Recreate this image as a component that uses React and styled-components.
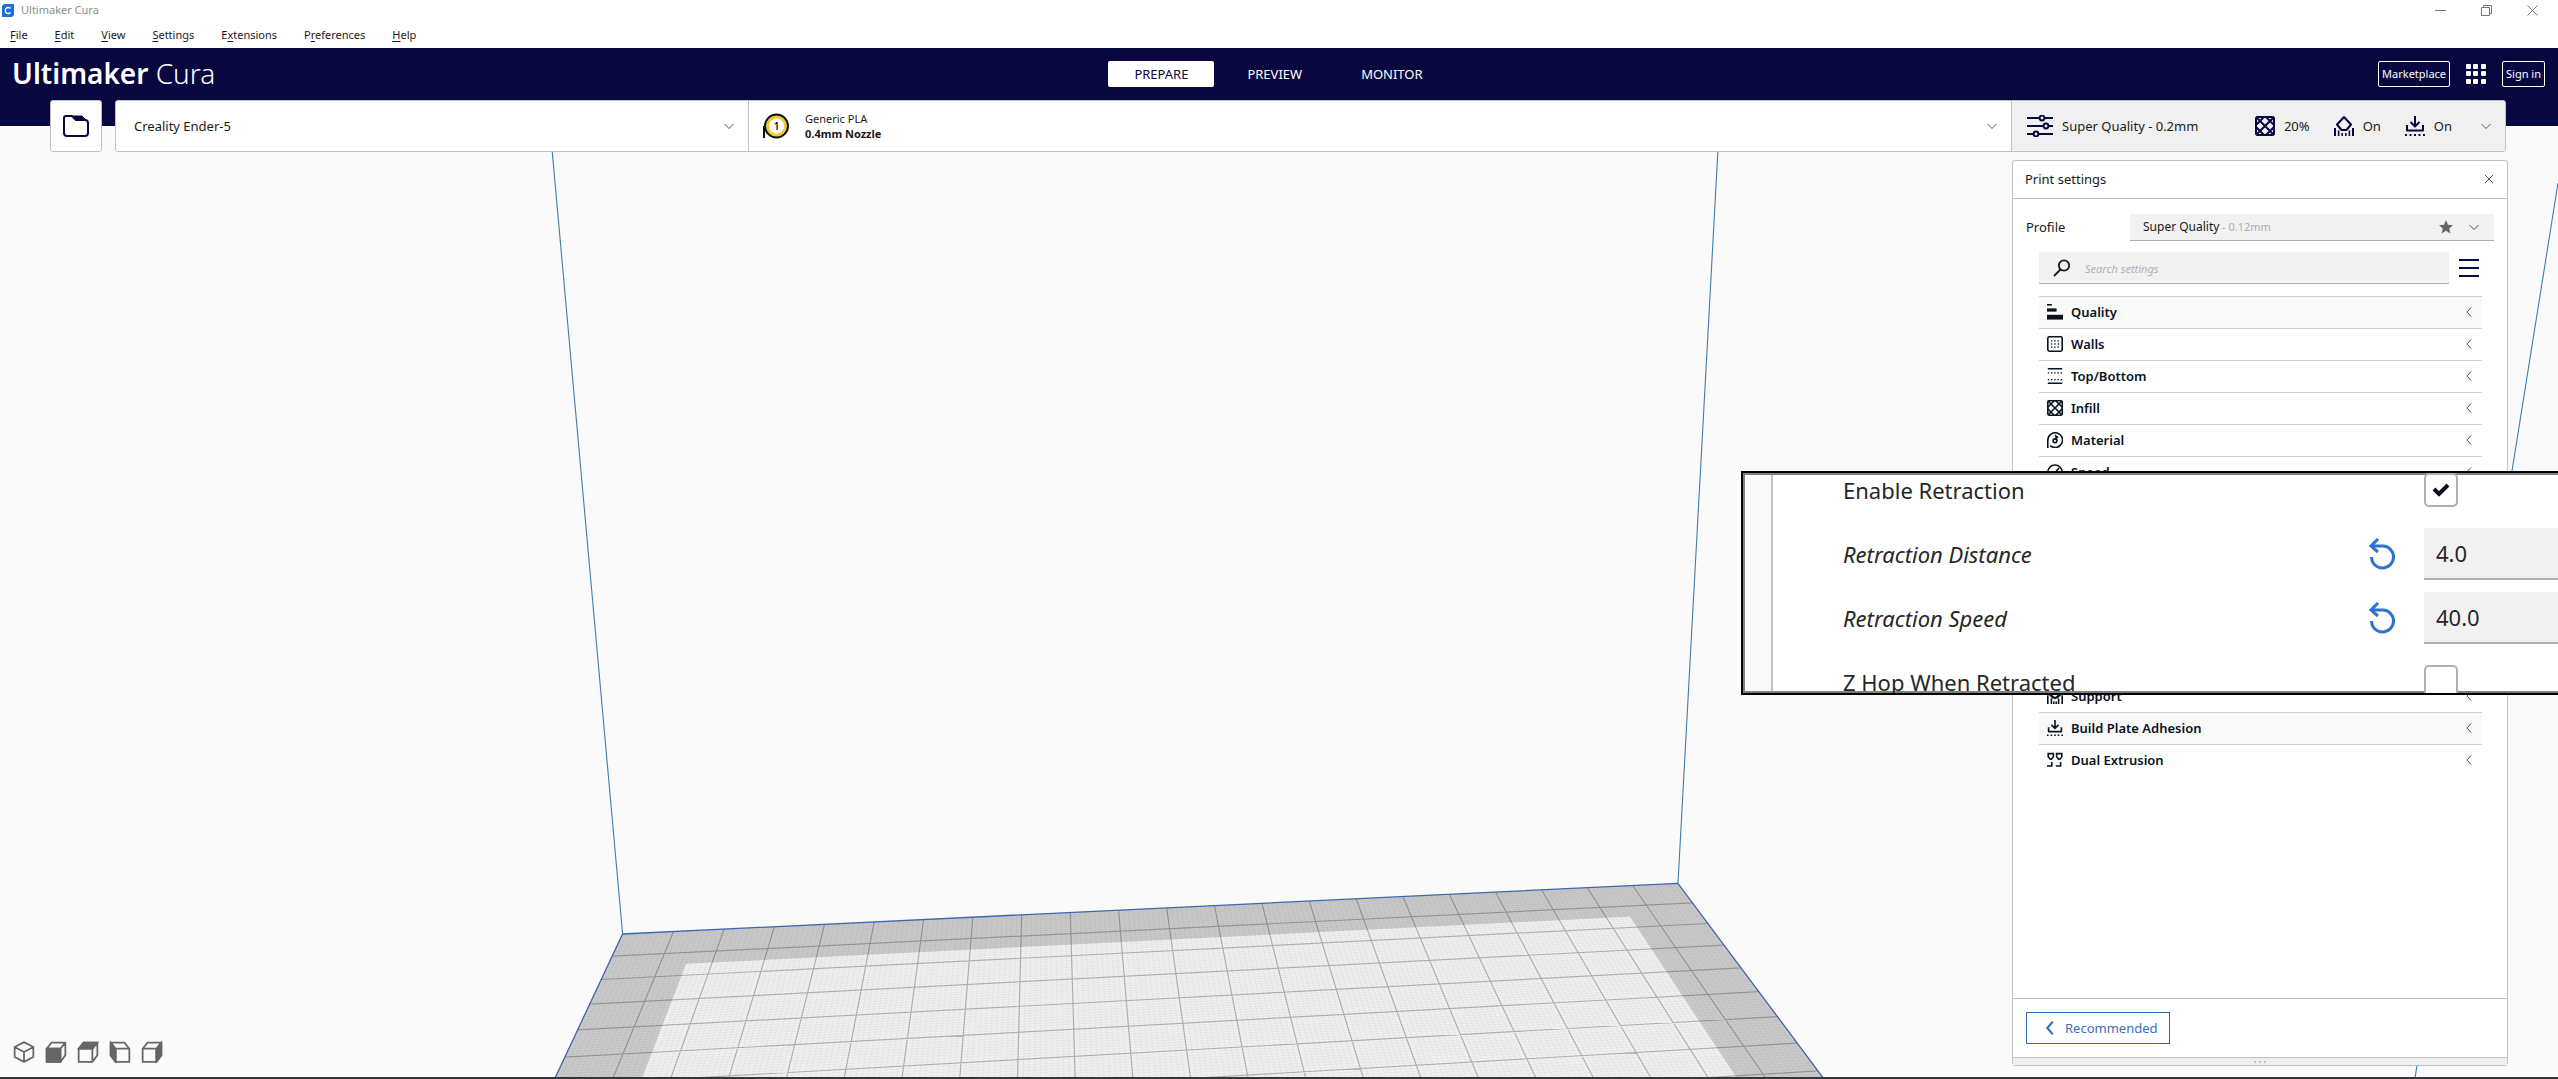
import React, { useState } from "react";
import styled, { createGlobalStyle, css } from "styled-components";

const NAVY = "#08073f";
const LINE = "#c0c1c2";
const TEXT = "#191919";

const GlobalStyle = createGlobalStyle`
  * {
    box-sizing: border-box;
  }

  body {
    margin: 0;
    background: #fafafa;
    color: ${TEXT};
    font-family: "Noto Sans", "Open Sans", sans-serif;
    font-size: 13px;
    line-height: 18px;
  }

  button, input, select {
    margin: 0;
    padding: 0;
    border: 0;
    background: none;
    color: inherit;
    font: inherit;
  }

  button {
    cursor: pointer;
  }

  svg {
    display: block;
    flex: none;
  }
`;

const Page = styled.div`
  position: relative;
  min-height: 100vh;
  display: flex;
  flex-direction: column;
  overflow: hidden;
  border-bottom: 2px solid #35363a;
`;

const TitleBar = styled.div`
  position: relative;
  display: flex;
  align-items: center;
  justify-content: space-between;
  height: 22px;
  padding: 0 20px 2px 2px;
  background: white;
  color: #8c8c8c;
  font-size: 11px;
`;

const AppTitle = styled.div`
  display: flex;
  align-items: center;
  gap: 7px;
`;

const WindowButtons = styled.div`
  display: flex;
  gap: 35px;
`;

const MenuBar = styled.nav`
  position: relative;
  display: flex;
  gap: 27px;
  height: 26px;
  padding: 4px 10px;
  background: white;
  font-size: 11px;
`;

const MenuItem = styled.button`
  u {
    text-underline-offset: 2px;
  }
`;

const Header = styled.header`
  position: relative;
  display: grid;
  grid-template-columns: 1fr auto 1fr;
  align-items: start;
  height: 78px;
  padding: 13px 13px 0 12px;
  background: ${NAVY};
  color: white;
`;

const Logo = styled.div`
  font-size: 28px;
  line-height: 24px;
  font-weight: 300;

  b {
    font-weight: 600;
  }
`;

const Stages = styled.div`
  display: flex;
  gap: 7px;
`;

const Stage = styled.button`
  height: 26px;
  padding: 0 26px;
  border-radius: 2px;
  font-size: 13px;
  background: ${props => (props.$active ? "white" : "transparent")};
  color: ${props => (props.$active ? NAVY : "white")};
`;

const Account = styled.div`
  display: flex;
  align-items: center;
  justify-content: flex-end;
  gap: 16px;
`;

const OutlineButton = styled.button`
  height: 26px;
  padding: 0 3px;
  border: 1px solid white;
  border-radius: 2px;
  font-size: 11px;
`;

const TopBar = styled.div`
  position: relative;
  display: flex;
  gap: 13px;
  height: 52px;
  margin: -26px 52px 0 50px;
`;

const boxed = css`
  border: 1px solid ${LINE};
  border-radius: 3px;
  background: white;
`;

const OpenButton = styled.button`
  ${boxed}
  display: flex;
  align-items: center;
  justify-content: center;
  width: 52px;
`;

const Selectors = styled.div`
  ${boxed}
  display: flex;
  flex: 1;
  overflow: hidden;
`;

const Selector = styled.button`
  display: flex;
  align-items: center;
  gap: ${props => props.$gap || 0}px;
  flex: ${props => props.$grow || "none"};
  width: ${props => (props.$width ? props.$width + "px" : "auto")};
  padding: 0 14px 0 ${props => props.$left}px;
  text-align: left;
  background: ${props => (props.$shaded ? "#f0f0f0" : "white")};

  & + & {
    border-left: 1px solid ${LINE};
  }
`;

const Grow = styled.span`
  flex: 1;
`;

const MaterialText = styled.span`
  display: flex;
  flex-direction: column;
  flex: 1;
  font-size: 11px;
  line-height: 15px;
`;

const Summary = styled.span`
  display: flex;
  align-items: center;
  gap: ${props => props.$gap || 9}px;
`;

const SummaryGroup = styled.span`
  display: flex;
  gap: 24px;
  margin-right: 29px;
`;

const Scene = styled.svg`
  position: absolute;
  top: 0;
  left: 0;
  width: 100%;
  height: 100%;
`;

const Workspace = styled.main`
  position: relative;
  display: flex;
  flex: 1;
  align-items: stretch;
  justify-content: space-between;
  padding: 8px 50px 11px 13px;
`;

const ViewButtons = styled.div`
  display: flex;
  align-items: flex-end;
  gap: 10px;
  padding-bottom: 3px;
`;

const Panel = styled.section`
  ${boxed}
  display: flex;
  flex-direction: column;
  width: 496px;
`;

const PanelHeader = styled.div`
  display: flex;
  align-items: center;
  justify-content: space-between;
  height: 38px;
  padding: 0 13px 2px 12px;
  border-bottom: 1px solid ${LINE};
`;

const ProfileRow = styled.div`
  display: flex;
  align-items: center;
  height: 28px;
  margin: 14px 13px 0 13px;

  label {
    width: 104px;
  }
`;

const ProfileBox = styled.div`
  display: flex;
  align-items: center;
  flex: 1;
  height: 27px;
  padding: 0 15px 0 13px;
  background: #f2f2f2;
  border-bottom: 1px solid #b0b0b0;
  font-size: 12px;

  select {
    appearance: none;
  }
`;

const ProfileHeight = styled.span`
  flex: 1;
  padding-left: 2px;
  font-size: 11px;
  color: #aaaaaa;
`;

const SearchRow = styled.div`
  display: flex;
  align-items: center;
  gap: 10px;
  margin: 11px 28px 12px 26px;
`;

const SearchBox = styled.label`
  display: flex;
  align-items: center;
  gap: 14px;
  flex: 1;
  height: 32px;
  padding: 0 14px;
  background: #f2f2f2;
  border-bottom: 1px solid #b0b0b0;

  input {
    flex: 1;
    padding-top: 3px;
    outline: none;
    font-size: 11px;
    font-style: italic;
  }

  input::placeholder {
    color: #b0b0b0;
  }
`;

const Categories = styled.div`
  display: flex;
  flex-direction: column;
  flex: 1;
  margin: 0 25px 0 26px;
`;

const Category = styled.button`
  display: flex;
  align-items: center;
  gap: 8px;
  height: 32px;
  padding: 0 8px 1px 8px;
  border-top: 1px solid #d0d0d0;
  background: ${props => (props.$shaded ? "#f9f9f9" : "white")};
  color: #08121e;
  font-weight: 600;
  text-align: left;
`;

const OpenSettings = styled.div`
  height: 192px;
`;

const PanelFooter = styled.div`
  padding: 13px;
  border-top: 1px solid ${LINE};
`;

const RecommendedButton = styled.button`
  display: flex;
  align-items: center;
  gap: 8px;
  height: 32px;
  padding: 0 11px 0 16px;
  border: 1px solid #2e6aa8;
  color: #3a6fc0;
`;

const DragHandle = styled.div`
  display: flex;
  align-items: center;
  justify-content: center;
  gap: 3px;
  height: 8px;
  border-top: 1px solid ${LINE};
  background: #f0f0f0;

  i {
    width: 2px;
    height: 2px;
    background: #c4c4c4;
  }
`;

const Magnifier = styled.section`
  position: absolute;
  top: 471px;
  right: 0;
  width: 817px;
  height: 224px;
  overflow: hidden;
  border: 2px solid black;
  border-right: 0;
  background: #fafafa;
`;

const MagnifierInner = styled.div`
  display: flex;
  height: 220px;
  padding-left: 26px;
  border: 2px solid #808080;
  border-right: 0;
`;

const MagnifierRows = styled.div`
  display: flex;
  flex-direction: column;
  justify-content: center;
  flex: 1;
  padding: 5px 0 0 70px;
  border-left: 2px solid #c4c4c4;
  background: white;
`;

const SettingRow = styled.div`
  display: flex;
  align-items: center;
  flex: none;
  height: 64px;
  font-size: 22px;
  line-height: 30px;
  color: #262626;

  label {
    flex: 1;
    font-style: ${props => (props.$changed ? "italic" : "normal")};
  }
`;

const SettingValue = styled.div`
  display: flex;
  width: 134px;
`;

const ResetButton = styled.button`
  margin-right: 27px;
`;

const NumberInput = styled.input`
  width: 100%;
  height: 52px;
  padding-left: 12px;
  background: #f2f2f2;
  border-bottom: 2px solid #b0b0b0;
`;

const CheckHolder = styled.div`
  position: relative;
  width: 34px;
  height: 34px;

  input {
    appearance: none;
    display: block;
    width: 34px;
    height: 34px;
    border: 2px solid #b0b0b0;
    border-radius: 5px;
    background: white;
  }

  svg {
    position: absolute;
    top: 9px;
    left: 8px;
    pointer-events: none;
  }
`;

// build plate seen in perspective, u runs along the back edge, v to the front (cm)
const plate = (u, v) => {
  const w = 1 + 0.00292 * u - 0.02408 * v;
  const x = (52.87 * u - 25.15 * v + 622.6) / w;
  const y = (0.277 * u - 0.85 * v + 935) / w;
  return `${x.toFixed(1)} ${y.toFixed(1)}`;
};

const PLATE_WIDTH = 22;
const PLATE_DEPTH = 10;

const gridPath = step => {
  let d = "";
  for (let i = 1; i * step < PLATE_WIDTH; i++) {
    d += `M${plate(i * step, 0)}L${plate(i * step, PLATE_DEPTH)}`;
  }
  for (let i = 1; i * step < PLATE_DEPTH; i++) {
    d += `M${plate(0, i * step)}L${plate(PLATE_WIDTH, i * step)}`;
  }
  return d;
};

const quad = (u1, u2, v1) =>
  `M${plate(u1, v1)}L${plate(u2, v1)}L${plate(u2, PLATE_DEPTH)}L${plate(u1, PLATE_DEPTH)}Z`;

const BuildVolume = () => (
  <Scene viewBox="0 0 2558 1079" preserveAspectRatio="xMidYMid slice">
    <path d={quad(0, 22, 0)} fill="#cacaca" />
    <path d={quad(1.5, 20.5, 1.5)} fill="#f0f0f0" />
    <path d={gridPath(0.1)} stroke="#000" strokeOpacity="0.04" strokeWidth="1" />
    <path d={gridPath(1)} stroke="#000" strokeOpacity="0.24" strokeWidth="1.2" />
    <path d={quad(0, 22, 0)} fill="none" stroke="#3c66ad" strokeWidth="1.3" />
    <path
      d="M552 150L622.6 935M1718 150L1678 884M2558 184L2415 1079"
      fill="none"
      stroke="#3d7cb4"
      strokeWidth="1.1"
    />
  </Scene>
);

const Icon = ({ size = 20, box = 20, width = 2, color = NAVY, children }) => (
  <svg
    width={size}
    height={size}
    viewBox={`0 0 ${box} ${box}`}
    fill="none"
    stroke={color}
    strokeWidth={width}
    aria-hidden="true"
  >
    {children}
  </svg>
);

const Chevron = ({ left, size = 10, width = 1, color = "#555" }) => (
  <Icon size={size} box={10} width={width} color={color}>
    <path d={left ? "M7 0.5L3 5L7 9.5" : "M0.5 3L5 7.5L9.5 3"} />
  </Icon>
);

const InfillShape = () => (
  <>
    <rect x="1" y="1" width="18" height="18" rx="2" />
    <path d="M1 1L19 19M1 19L19 1M1 9L9 1M11 19L19 11M1 11L9 19M11 1L19 9" />
  </>
);

const SupportShape = () => (
  <>
    <path d="M10 1L17 8.5L12.5 14H7.5L3 8.5Z" strokeLinejoin="round" />
    <path d="M1 12V20M19 12V20" />
    <path d="M4.6 14.5V20M15.4 14.5V20M8.2 17V20M11.8 17V20" strokeWidth="1.6" />
  </>
);

const SmallSupportShape = () => (
  <>
    <path d="M3 1V8L7 12H13L17 8V1M3 7L10 13L17 7" strokeLinejoin="round" />
    <path d="M1 9V20M19 9V20M5.5 13V20M14.5 13V20M8.5 17V20M11.5 17V20" />
  </>
);

const AdhesionShape = () => (
  <>
    <path d="M10 0V10M5.5 6L10 10.5L14.5 6M2 9V14.5H18V9" strokeLinejoin="round" />
    <path d="M0 19H20" strokeDasharray="2 2.5" />
  </>
);

const CATEGORY_ICONS = {
  Quality: (
    <>
      <path d="M0 1H6" />
      <path d="M0 7.5H12" strokeWidth="4" />
      <path d="M0 16.5H20" strokeWidth="6" />
    </>
  ),
  Walls: (
    <>
      <rect x="1" y="1" width="18" height="18" rx="2" />
      <path
        d="M5 6H15.5M5 14H15.5M5.8 9V12M14.2 9V12M10 9V12"
        strokeWidth="1.6"
        strokeDasharray="1.8 2.2"
      />
    </>
  ),
  "Top/Bottom": (
    <>
      <path d="M1 1H19M1 19H19" />
      <path d="M1 6H19M1 14.5H19" strokeWidth="1.6" strokeDasharray="1.8 2.2" />
    </>
  ),
  Infill: <InfillShape />,
  Material: (
    <>
      <path d="M1 20V10A9.2 9.2 0 1 1 4 17" />
      <circle cx="10" cy="11" r="2.4" />
      <path d="M12 10L11 5L14 7" />
    </>
  ),
  Speed: (
    <>
      <path d="M4 17A9 9 0 1 1 16 17" />
      <path d="M10 11L15 5" />
    </>
  ),
  Support: <SmallSupportShape />,
  "Build Plate Adhesion": <AdhesionShape />,
  "Dual Extrusion": (
    <>
      <path d="M1.5 2H8V6L5.5 9H4L1.5 6ZM12 2H18.5V6L16 9H14.5L12 6Z" />
      <path d="M6 12.5V17.5H0M17 12.5V17.5H11" />
    </>
  )
};

const UPPER_CATEGORIES = ["Quality", "Walls", "Top/Bottom", "Infill", "Material", "Speed"];
const LOWER_CATEGORIES = ["Support", "Build Plate Adhesion", "Dual Extrusion"];

const MENU = [
  ["", "F", "ile"],
  ["", "E", "dit"],
  ["", "V", "iew"],
  ["", "S", "ettings"],
  ["E", "x", "tensions"],
  ["P", "r", "eferences"],
  ["", "H", "elp"]
];

const BOX_LEFT = "M1.5 7L6 1.5H18.5V13L14 19H1.5ZM1.5 7H14V19M14 7L18.5 1.5";
const BOX_RIGHT = "M18.5 7L14 1.5H1.5V13L6 19H18.5ZM18.5 7H6V19M6 7L1.5 1.5";

const VIEWS = [
  { name: "3D view", outline: "M10 1L18.5 5.5V14.5L10 19L1.5 14.5V5.5ZM1.5 5.5L10 10L18.5 5.5M10 10V19" },
  { name: "Front view", outline: BOX_LEFT, face: "M1.5 7H14V19H1.5Z" },
  { name: "Top view", outline: BOX_LEFT, face: "M1.5 7L6 1.5H18.5L14 7Z" },
  { name: "Left view", outline: BOX_RIGHT, face: "M1.5 1.5L6 7V19L1.5 13Z" },
  { name: "Right view", outline: BOX_LEFT, face: "M14 7L18.5 1.5V13L14 19Z" }
];

const CategoryRow = ({ name, shaded }) => (
  <Category $shaded={shaded}>
    <Icon size={16} color="#08121e">
      {CATEGORY_ICONS[name]}
    </Icon>
    <Grow>{name}</Grow>
    <Chevron left />
  </Category>
);

const CheckSetting = ({ id, label, defaultChecked }) => {
  const [checked, setChecked] = useState(defaultChecked);
  return (
    <SettingRow>
      <label htmlFor={id}>{label}</label>
      <SettingValue>
        <CheckHolder>
          <input
            id={id}
            type="checkbox"
            checked={checked}
            onChange={() => setChecked(!checked)}
          />
          {checked && (
            <svg width="18" height="16" viewBox="0 0 18 16" fill="none" stroke="#08121e" strokeWidth="4">
              <path d="M2 7L7 12L16 3" />
            </svg>
          )}
        </CheckHolder>
      </SettingValue>
    </SettingRow>
  );
};

const NumberSetting = ({ id, label, initial }) => {
  const [value, setValue] = useState(initial);
  return (
    <SettingRow $changed>
      <label htmlFor={id}>{label}</label>
      <ResetButton aria-label="Reset" onClick={() => setValue(initial)}>
        <svg width="29" height="32" viewBox="0 0 29 32" fill="none" stroke="#2f72d6" strokeWidth="3">
          <path d="M5 8H15A11 11 0 1 1 3.5 19" />
          <path d="M10 1L3 8L10 14" />
        </svg>
      </ResetButton>
      <SettingValue>
        <NumberInput id={id} value={value} onChange={e => setValue(e.target.value)} />
      </SettingValue>
    </SettingRow>
  );
};

const App = () => {
  const [stage, setStage] = useState("PREPARE");

  return (
    <Page>
      <GlobalStyle />
      <BuildVolume />
      <TitleBar>
        <AppTitle>
          <svg width="12" height="13" viewBox="0 0 12 13" fill="none">
            <path d="M2 0H12V11L10 13H0V2Z" fill="#1f6fd6" />
            <path d="M8.5 4.5A3 3 0 1 0 8.5 8.5" stroke="white" strokeWidth="1.3" />
          </svg>
          Ultimaker Cura
        </AppTitle>
        <WindowButtons>
          <button aria-label="Minimize">
            <Icon size={11} box={11} width={1} color="#777">
              <path d="M0 5.5H11" />
            </Icon>
          </button>
          <button aria-label="Restore">
            <Icon size={11} box={11} width={1} color="#777">
              <path d="M0.5 2.5H8.5V10.5H0.5ZM2.5 2.5V0.5H10.5V8.5H8.5" />
            </Icon>
          </button>
          <button aria-label="Close window">
            <Icon size={11} box={11} width={1} color="#777">
              <path d="M0.5 0.5L10.5 10.5M10.5 0.5L0.5 10.5" />
            </Icon>
          </button>
        </WindowButtons>
      </TitleBar>
      <MenuBar>
        {MENU.map(([before, key, after]) => (
          <MenuItem key={before + key + after}>
            {before}
            <u>{key}</u>
            {after}
          </MenuItem>
        ))}
      </MenuBar>
      <Header>
        <Logo>
          <b>Ultimaker</b> Cura
        </Logo>
        <Stages>
          {["PREPARE", "PREVIEW", "MONITOR"].map(name => (
            <Stage key={name} $active={name === stage} onClick={() => setStage(name)}>
              {name}
            </Stage>
          ))}
        </Stages>
        <Account>
          <OutlineButton>Marketplace</OutlineButton>
          <button aria-label="Applications">
            <svg width="20" height="20" viewBox="0 0 20 20" fill="white">
              {[0, 7, 15].map(y =>
                [0, 7, 15].map(x => (
                  <rect key={x + "-" + y} x={x} y={y} width="5" height="5" rx="1" />
                ))
              )}
            </svg>
          </button>
          <OutlineButton>Sign in</OutlineButton>
        </Account>
      </Header>
      <TopBar>
        <OpenButton aria-label="Open file">
          <svg width="26" height="22" viewBox="0 0 26 22" fill="none" stroke={NAVY} strokeWidth="2">
            <path d="M1 3Q1 1 3 1H9L13 5H22Q25 5 25 8V18Q25 21 22 21H4Q1 21 1 18Z" />
            <path d="M9 1H19L23 5H13Z" fill={NAVY} strokeWidth="1" />
          </svg>
        </OpenButton>
        <Selectors>
          <Selector $width={632} $left={18}>
            <Grow>Creality Ender-5</Grow>
            <Chevron />
          </Selector>
          <Selector $grow="1" $left={14} $gap={16}>
            <svg width="26" height="26" viewBox="0 0 26 26">
              <path d="M1 13V25" stroke="#111" strokeWidth="2" />
              <circle cx="13.5" cy="13" r="11.5" fill="#f0c938" stroke="#111" strokeWidth="2" />
              <circle cx="13.5" cy="13" r="7.5" fill="white" />
              <text x="13.5" y="16.5" fontSize="10" fontWeight="600" textAnchor="middle" fill="#111">
                1
              </text>
            </svg>
            <MaterialText>
              <span>Generic PLA</span>
              <b>0.4mm Nozzle</b>
            </MaterialText>
            <Chevron />
          </Selector>
          <Selector $width={494} $left={15} $shaded>
            <Grow>
              <Summary>
                <svg width="26" height="22" viewBox="0 0 26 22" fill="none" stroke={NAVY} strokeWidth="2">
                  <path d="M0 3H12M18 3H26M0 11H16M22 11H26M0 19H6M12 19H26" />
                  <circle cx="15" cy="3" r="2.4" />
                  <circle cx="19" cy="11" r="2.4" />
                  <circle cx="9" cy="19" r="2.4" />
                </svg>
                Super Quality - 0.2mm
              </Summary>
            </Grow>
            <SummaryGroup>
              <Summary>
                <Icon>
                  <InfillShape />
                </Icon>
                20%
              </Summary>
              <Summary>
                <Icon>
                  <SupportShape />
                </Icon>
                On
              </Summary>
              <Summary>
                <Icon>
                  <AdhesionShape />
                </Icon>
                On
              </Summary>
            </SummaryGroup>
            <Chevron />
          </Selector>
        </Selectors>
      </TopBar>
      <Workspace>
        <ViewButtons>
          {VIEWS.map(view => (
            <button key={view.name} aria-label={view.name}>
              <Icon size={22} color="#666" width={1.6}>
                {view.face && <path d={view.face} fill="#666" />}
                <path d={view.outline} strokeLinejoin="round" />
              </Icon>
            </button>
          ))}
        </ViewButtons>
        <Panel>
          <PanelHeader>
            Print settings
            <button aria-label="Close">
              <Icon size={10} box={10} width={1} color="#555">
                <path d="M1 1L9 9M9 1L1 9" />
              </Icon>
            </button>
          </PanelHeader>
          <ProfileRow>
            <label htmlFor="profile">Profile</label>
            <ProfileBox>
              <select id="profile">
                <option>Super Quality</option>
              </select>
              <ProfileHeight>- 0.12mm</ProfileHeight>
              <Summary $gap={16}>
                <svg width="14" height="14" viewBox="0 0 14 14" fill="#666">
                  <path d="M7 0L9 4.8L14 5.2L10.2 8.4L11.4 13.5L7 10.8L2.6 13.5L3.8 8.4L0 5.2L5 4.8Z" />
                </svg>
                <Chevron />
              </Summary>
            </ProfileBox>
          </ProfileRow>
          <SearchRow>
            <SearchBox>
              <Icon size={18} box={18} color="#191919" width={1.8}>
                <circle cx="11" cy="6.5" r="5.2" />
                <path d="M7.5 10.5L1 17" />
              </Icon>
              <input type="text" placeholder="Search settings" aria-label="Search settings" />
            </SearchBox>
            <button aria-label="Setting visibility">
              <Icon>
                <path d="M0 2H20M0 10H20M0 18H20" />
              </Icon>
            </button>
          </SearchRow>
          <Categories>
            {UPPER_CATEGORIES.map(name => (
              <CategoryRow key={name} name={name} shaded={name === "Quality"} />
            ))}
            <OpenSettings />
            {LOWER_CATEGORIES.map(name => (
              <CategoryRow key={name} name={name} shaded={name === "Build Plate Adhesion"} />
            ))}
          </Categories>
          <PanelFooter>
            <RecommendedButton>
              <Chevron left size={14} width={1.5} color="#3a6fc0" />
              Recommended
            </RecommendedButton>
          </PanelFooter>
          <DragHandle>
            <i />
            <i />
            <i />
          </DragHandle>
        </Panel>
      </Workspace>
      <Magnifier>
        <MagnifierInner>
          <MagnifierRows>
            <CheckSetting id="retraction" label="Enable Retraction" defaultChecked />
            <NumberSetting id="distance" label="Retraction Distance" initial="4.0" />
            <NumberSetting id="speed" label="Retraction Speed" initial="40.0" />
            <CheckSetting id="zhop" label="Z Hop When Retracted" defaultChecked={false} />
          </MagnifierRows>
        </MagnifierInner>
      </Magnifier>
    </Page>
  );
};

export default App;
